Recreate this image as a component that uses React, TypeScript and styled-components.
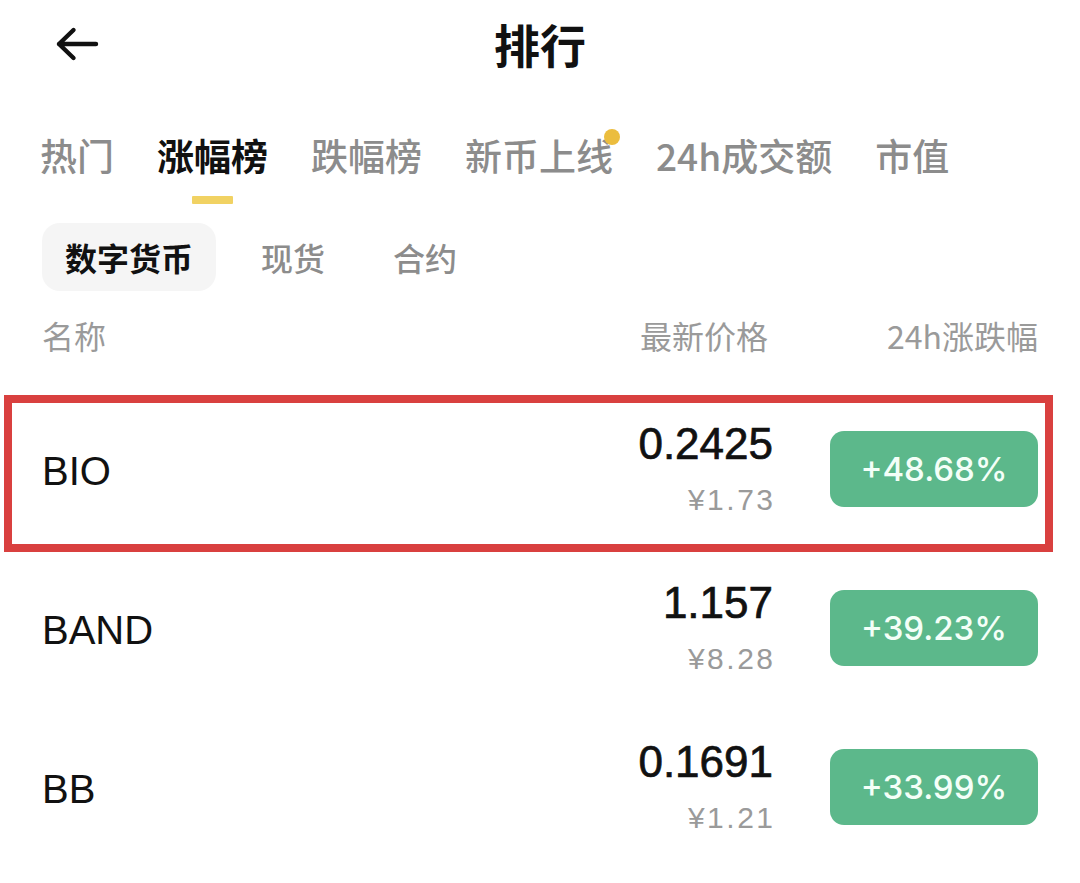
import React from "react";
import styled, { createGlobalStyle } from "styled-components";

const CJK = `"Noto Sans CJK SC", "Noto Sans", sans-serif`;
const LATIN = `"Liberation Sans", Arial, "Noto Sans CJK SC", sans-serif`;
const NUM = `Inter, "Noto Sans CJK SC", sans-serif`;

const GlobalStyle = createGlobalStyle`
  html, body {
    margin: 0;
    padding: 0;
    background: #ffffff;
  }
  body {
    font-family: ${CJK};
    color: #111111;
  }
  * {
    box-sizing: border-box;
  }
`;

interface ICoin {
  name: string;
  price: string;
  cny: string;
  change: string;
}

const coins: ICoin[] = [
  { name: "BIO", price: "0.2425", cny: "¥1.73", change: "+48.68%" },
  { name: "BAND", price: "1.157", cny: "¥8.28", change: "+39.23%" },
  { name: "BB", price: "0.1691", cny: "¥1.21", change: "+33.99%" },
];

const tabs = ["热门", "涨幅榜", "跌幅榜", "新币上线", "24h成交额", "市值"];
const subTabs = ["数字货币", "现货", "合约"];

const BackArrow = () => (
  <svg width="44" height="36" viewBox="0 0 44 36" fill="none">
    <path
      d="M41 18H4M18.5 4L4 18l14.5 14"
      stroke="#111"
      strokeWidth="4.4"
      strokeLinecap="round"
      strokeLinejoin="round"
    />
  </svg>
);

export default function App() {
  return (
    <Page>
      <GlobalStyle />
      <Header>
        <BackButton>
          <BackArrow />
        </BackButton>
        <Title>排行</Title>
        <div />
      </Header>

      <TabBar>
        {tabs.map((tab, index) => (
          <Tab key={tab}>
            <TabLabel $active={index === 1}>
              {tab}
              {tab === "新币上线" && <Dot />}
            </TabLabel>
            <TabLine $active={index === 1} />
          </Tab>
        ))}
      </TabBar>

      <SubTabBar>
        {subTabs.map((tab, index) => (
          <SubTab key={tab} $active={index === 0}>
            {tab}
          </SubTab>
        ))}
      </SubTabBar>

      <ColumnHead>
        <HeadCell>名称</HeadCell>
        <HeadCell $right $inset={5}>
          最新价格
        </HeadCell>
        <HeadCell $right>24h涨跌幅</HeadCell>
      </ColumnHead>

      <List>
        {coins.map((coin, index) => (
          <Row key={coin.name} $marked={index === 0}>
            <CoinName>{coin.name}</CoinName>
            <PriceBox>
              <Price>{coin.price}</Price>
              <Cny>{coin.cny}</Cny>
            </PriceBox>
            <Change>{coin.change}</Change>
          </Row>
        ))}
      </List>
    </Page>
  );
}

const Page = styled.div({
  width: 1080,
  minHeight: 883,
  background: "#ffffff",
});

const Header = styled.header({
  height: 86,
  display: "grid",
  gridTemplateColumns: "1fr auto 1fr",
  alignItems: "center",
});

const BackButton = styled.div({
  display: "flex",
  alignItems: "center",
  paddingLeft: 55,
  paddingTop: 2,
});

const Title = styled.h1({
  margin: 0,
  fontFamily: CJK,
  fontSize: 46,
  fontWeight: 700,
  lineHeight: "56px",
  color: "#111111",
});

const TabBar = styled.nav({
  display: "flex",
  gap: 43,
  paddingLeft: 40,
  paddingTop: 45,
});

const Tab = styled.div({
  display: "flex",
  flexDirection: "column",
  alignItems: "center",
});

const TabLabel = styled.span<{ $active?: boolean }>((p) => ({
  position: "relative",
  fontFamily: CJK,
  fontSize: 37,
  lineHeight: "48px",
  fontWeight: p.$active ? 700 : 500,
  color: p.$active ? "#111111" : "#8c8c8c",
  whiteSpace: "nowrap",
}));

const Dot = styled.span({
  position: "absolute",
  top: -2,
  right: -7,
  width: 16,
  height: 16,
  borderRadius: "50%",
  background: "#EBBD3E",
});

const TabLine = styled.div<{ $active?: boolean }>((p) => ({
  width: 41,
  height: 8,
  marginTop: 17,
  borderRadius: 1,
  background: p.$active ? "#F1D263" : "transparent",
}));

const SubTabBar = styled.div({
  display: "flex",
  gap: 22,
  paddingLeft: 42,
  marginTop: 19,
});

const SubTab = styled.div<{ $active?: boolean }>((p) => ({
  height: 68,
  padding: "0 23px",
  display: "flex",
  alignItems: "center",
  borderRadius: 18,
  background: p.$active ? "#F5F5F5" : "transparent",
  fontFamily: CJK,
  fontSize: 32,
  fontWeight: p.$active ? 700 : 500,
  color: p.$active ? "#111111" : "#8c8c8c",
}));

const ColumnHead = styled.div({
  display: "grid",
  gridTemplateColumns: "1fr auto 208px",
  columnGap: 57,
  padding: "0 42px",
  marginTop: 24,
});

const HeadCell = styled.div<{ $right?: boolean; $inset?: number }>((p) => ({
  fontFamily: CJK,
  fontSize: 32,
  lineHeight: "40px",
  color: "#9a9a9a",
  textAlign: p.$right ? "right" : "left",
  paddingRight: p.$inset ?? 0,
}));

const List = styled.div({
  marginTop: 34,
});

const Row = styled.div<{ $marked?: boolean }>((p) => ({
  position: "relative",
  height: 159,
  display: "grid",
  gridTemplateColumns: "1fr auto 208px",
  columnGap: 57,
  alignItems: "center",
  padding: "0 42px",
  "&::after": p.$marked
    ? {
        content: '""',
        position: "absolute",
        left: 4,
        right: 27,
        top: 6,
        bottom: -4,
        border: "8px solid #D9403F",
        pointerEvents: "none",
      }
    : {},
}));

const CoinName = styled.div({
  fontFamily: LATIN,
  fontSize: 40,
  color: "#111111",
  paddingTop: 5,
});

const PriceBox = styled.div({
  display: "flex",
  flexDirection: "column",
  alignItems: "flex-end",
  gap: 12,
});

const Price = styled.div({
  fontFamily: LATIN,
  fontSize: 44,
  lineHeight: "50px",
  color: "#111111",
  WebkitTextStroke: "0.7px #111111",
});

const Cny = styled.div({
  fontFamily: LATIN,
  fontSize: 30,
  lineHeight: "38px",
  letterSpacing: 2.5,
  marginRight: -2.5,
  color: "#9a9a9a",
});

const Change = styled.div({
  height: 76,
  borderRadius: 14,
  background: "#5CB88B",
  display: "flex",
  alignItems: "center",
  justifyContent: "center",
  fontFamily: NUM,
  fontSize: 33,
  fontWeight: 500,
  color: "#F4FFF8",
});
